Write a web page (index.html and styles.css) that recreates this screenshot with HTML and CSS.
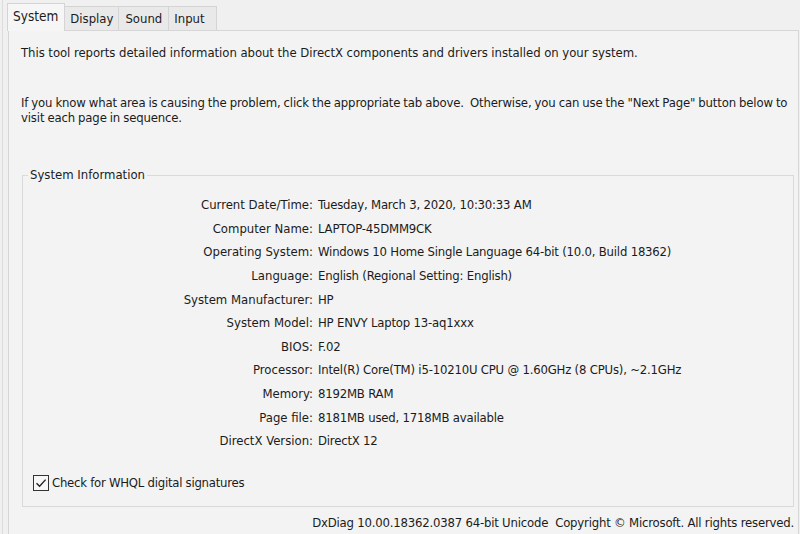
FILE: index.html
```html
<!DOCTYPE html>
<html>
<head>
<meta charset="utf-8">
<link rel="stylesheet" href="styles.css">
</head>
<body>
<div class="window">
  <div class="tabs">
    <div class="tab active">System</div>
    <div class="tab">Display</div>
    <div class="tab sound">Sound</div>
    <div class="tab last">Input</div>
  </div>
  <div class="panel">
    <p class="intro">This tool reports detailed information about the DirectX components and drivers installed on your system.</p>
    <p class="intro second">If you know what area is causing the problem, click the appropriate tab above.&nbsp; Otherwise, you can use the "Next Page" button below to<br>visit each page in sequence.</p>
    <fieldset class="group">
      <legend>System Information</legend>
      <div class="rows">
        <div class="label">Current Date/Time:</div><div class="value">Tuesday, March 3, 2020, 10:30:33 AM</div>
        <div class="label">Computer Name:</div><div class="value">LAPTOP-45DMM9CK</div>
        <div class="label">Operating System:</div><div class="value">Windows 10 Home Single Language 64-bit (10.0, Build 18362)</div>
        <div class="label">Language:</div><div class="value">English (Regional Setting: English)</div>
        <div class="label">System Manufacturer:</div><div class="value">HP</div>
        <div class="label">System Model:</div><div class="value">HP ENVY Laptop 13-aq1xxx</div>
        <div class="label">BIOS:</div><div class="value">F.02</div>
        <div class="label">Processor:</div><div class="value">Intel(R) Core(TM) i5-10210U CPU @ 1.60GHz (8 CPUs), ~2.1GHz</div>
        <div class="label">Memory:</div><div class="value">8192MB RAM</div>
        <div class="label">Page file:</div><div class="value">8181MB used, 1718MB available</div>
        <div class="label">DirectX Version:</div><div class="value">DirectX 12</div>
      </div>
      <label class="check">
        <span class="box"><svg width="14" height="14" viewBox="0 0 14 14"><path d="M2.5 7.2 L5.6 10.3 L11.6 3.6" fill="none" stroke="#222" stroke-width="1.4"/></svg></span>
        <span class="check-text">Check for WHQL digital signatures</span>
      </label>
    </fieldset>
    <div class="footer">DxDiag 10.00.18362.0387 64-bit Unicode&nbsp; Copyright © Microsoft. All rights reserved.</div>
  </div>
</div>
</body>
</html>
```

FILE: styles.css
```css
html, body {
  margin: 0;
  padding: 0;
}
body {
  width: 800px;
  height: 534px;
  overflow: hidden;
  background: #f0f0f0;
  font-family: "DejaVu Sans Condensed", "DejaVu Sans", sans-serif;
  font-stretch: condensed;
  font-size: 13px;
  color: #1b1b1b;
}
.window {
  height: 534px;
  border-left: 1px solid #dcdcdc;
  margin-left: 2px;
  padding-left: 4px;
  box-sizing: border-box;
}
.tabs {
  display: flex;
  align-items: flex-end;
  height: 30px;
  padding-left: 0;
}
.tab {
  height: 24px;
  line-height: 23px;
  padding: 0 5px;
  border: 1px solid #d4d4d4;
  border-bottom: none;
  border-left: none;
  background: #e9e9e9;
  box-sizing: border-box;
}
.tab.sound {
  padding: 0 6px 0 6px;
}
.tab.last {
  padding-right: 11px;
}
.tab.active {
  height: 28px;
  line-height: 25px;
  padding: 0 6px 0 5px;
  border-left: 1px solid #d4d4d4;
  background: #f6f6f6;
  margin-bottom: -1px;
  position: relative;
  z-index: 1;
  font-size: 13.5px;
}
.panel {
  width: 791px;
  height: 510px;
  margin-left: 1px;
  border: 1px solid #d6d6d6;
  border-bottom: none;
  background: #f3f3f3;
  box-sizing: border-box;
  padding: 14px 0 0 12px;
  display: flex;
  flex-direction: column;
}
.intro {
  margin: 0;
  line-height: 15px;
  letter-spacing: -0.05px;
}
.intro.second {
  margin-top: 35px;
  white-space: nowrap;
  letter-spacing: -0.15px;
  word-spacing: -0.5px;
}
.group {
  margin: 43px 0 0 1px;
  width: 772px;
  height: 339px;
  box-sizing: border-box;
  border: 1px solid #dadada;
  padding: 11px 0 0 0;
  display: flex;
  flex-direction: column;
}
.group legend {
  padding: 0 2px;
  margin-left: 5px;
  line-height: 14px;
}
.rows {
  display: grid;
  grid-template-columns: 290px auto;
  column-gap: 5px;
  row-gap: 0;
  grid-auto-rows: 23.6px;
  align-items: center;
}
.label {
  text-align: right;
}
.value {
  letter-spacing: -0.2px;
}
.check {
  display: flex;
  align-items: center;
  gap: 3px;
  margin: 22px 0 0 10px;
}
.check-text {
  letter-spacing: -0.25px;
}
.box {
  width: 16px;
  height: 16px;
  border: 1px solid #333;
  background: #f7f7f7;
  display: flex;
  align-items: center;
  justify-content: center;
  box-sizing: border-box;
}
.footer {
  margin-top: 8px;
  text-align: right;
  padding-right: 4px;
  letter-spacing: -0.2px;
}
```
